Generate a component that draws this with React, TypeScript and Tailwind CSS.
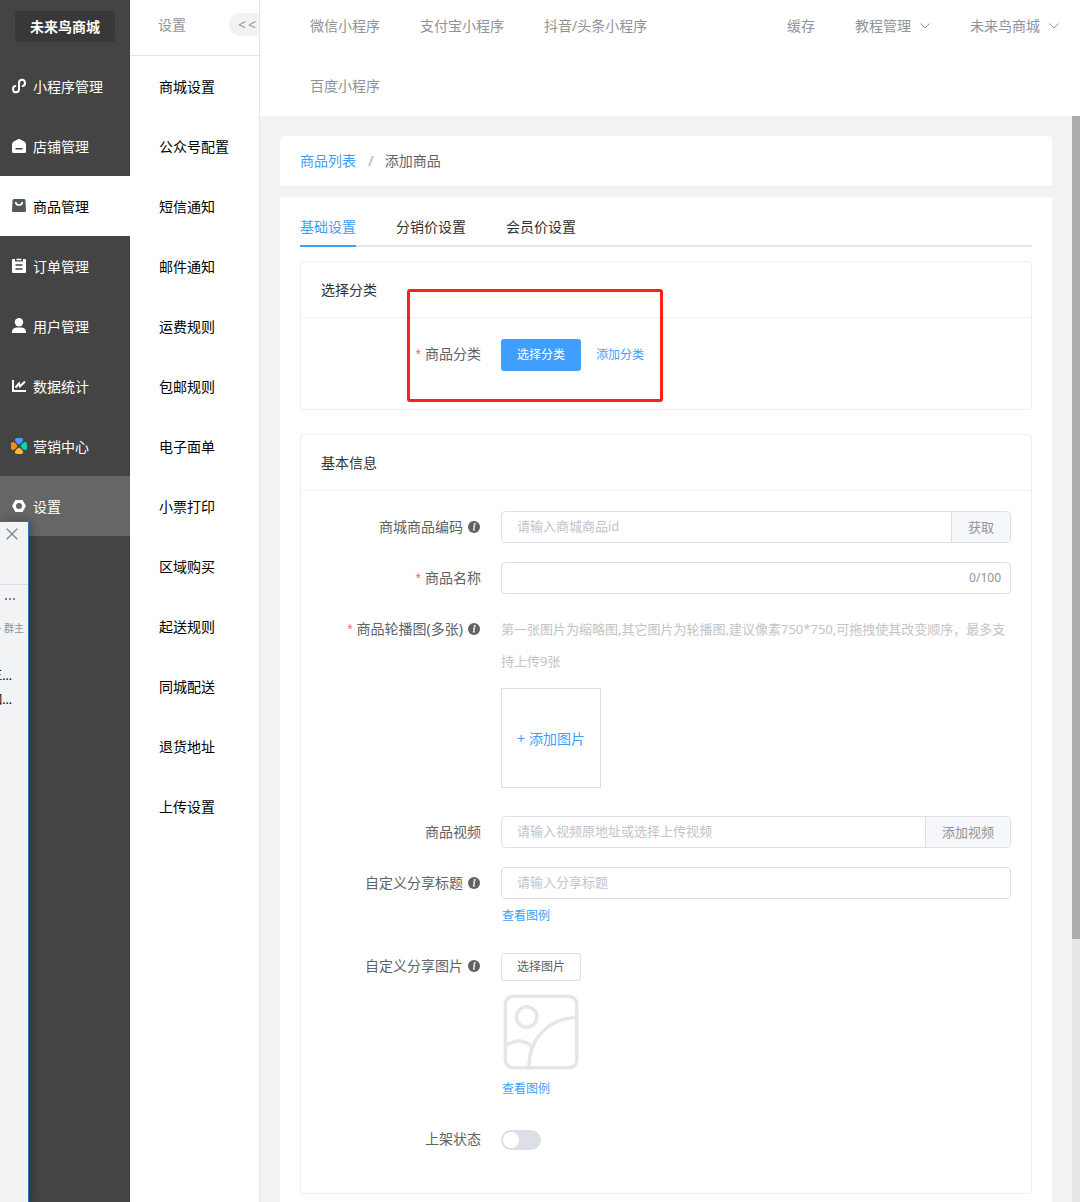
import type { ReactNode } from "react";
import { X } from "lucide-react";

function MiniProgramIcon() {
  return (
    <svg viewBox="0 0 16 16" className="size-4" fill="none" stroke="currentColor" strokeWidth="2" strokeLinecap="round" aria-hidden="true">
      <path d="M4.400 8A3 3.200 0 1 0 8 11V5A3 3.200 0 1 1 11.600 8" />
    </svg>
  );
}

function StoreIcon() {
  return (
    <svg viewBox="0 0 16 16" className="size-4" fill="currentColor" fillRule="evenodd" aria-hidden="true">
      <path d="M6.900 1.300Q8 .8 9.100 1.300L13.200 3.500Q15 4.600 15 6.500V13.500A1.500 1.500 0 0 1 13.500 15H2.500A1.500 1.500 0 0 1 1 13.500V6.500Q1 4.600 2.800 3.500ZM4.500 10V11.500H11.500V10Z" />
    </svg>
  );
}

function BagIcon() {
  return (
    <svg viewBox="0 0 16 16" className="size-4 text-[#50585f]" aria-hidden="true">
      <path fill="currentColor" d="M3 1H13Q14.300 1 14.400 2.300L15 12.500Q15 14 13.500 14H2.500Q1 14 1 12.500L1.600 2.300Q1.700 1 3 1Z" />
      <path d="M4.500 4Q5 7 8 7T11.500 4" fill="none" stroke="#fff" strokeWidth="1.600" />
    </svg>
  );
}

function OrderIcon() {
  return (
    <svg viewBox="0 0 16 16" className="size-4" aria-hidden="true">
      <path fill="currentColor" d="M2 1H4V3.500H12V1H14Q15 1 15 2V14Q15 15 14 15H2Q1 15 1 14V2Q1 1 2 1ZM5.500 0.800H10.500V2.300H5.500Z" />
      <path d="M4.500 7H11.500M4.500 11H11.500" stroke="#444" strokeWidth="1.500" />
    </svg>
  );
}

function UserIcon() {
  return (
    <svg viewBox="0 0 16 16" className="size-4" fill="currentColor" aria-hidden="true">
      <circle cx="8" cy="4.200" r="4.200" />
      <path d="M1 15V13.500Q1.500 9.500 6 9.500H10Q14.500 9.500 15 13.500V15Z" />
    </svg>
  );
}

function ChartIcon() {
  return (
    <svg viewBox="0 0 16 16" className="size-4" fill="none" stroke="currentColor" aria-hidden="true">
      <path d="M2 2V13H15" strokeWidth="2" />
      <path d="M4.500 9.500L8 5.500L9 8.500L14 3.500" strokeWidth="2" />
    </svg>
  );
}

function MarketingIcon() {
  return (
    <svg viewBox="0 0 16 16" className="size-4" aria-hidden="true">
      <path fill="#4a9bff" d="M5.500 0H10.500Q12.500.500 12 2.500Q11 5 8 6.500Q5 5 4 2.500Q3.500.500 5.500 0Z" />
      <path fill="#ff8c0a" d="M0 5.500V10.500Q.500 12.500 2.500 12Q5 11 6.500 8Q5 5 2.500 4Q.500 3.500 0 5.500Z" />
      <path fill="#00d8ae" d="M16 5.500V10.500Q15.500 12.500 13.500 12Q11 11 9.500 8Q11 5 13.500 4Q15.500 3.500 16 5.500Z" />
      <path fill="#ffb73c" d="M5.500 16H10.500Q12.500 15.500 12 13.500Q11 11 8 9.500Q5 11 4 13.500Q3.500 15.500 5.500 16Z" />
    </svg>
  );
}

function NutIcon() {
  return (
    <svg viewBox="0 0 16 16" className="size-4" aria-hidden="true">
      <path d="M5 3H11L13.800 8L11 13H5L2.200 8Z" fill="currentColor" stroke="currentColor" strokeWidth="2" strokeLinejoin="round" />
      <circle cx="8" cy="8" r="3" fill="#666" />
    </svg>
  );
}

function InfoIcon() {
  return (
    <svg viewBox="0 0 12 12" className="size-3 shrink-0" aria-hidden="true">
      <circle cx="6" cy="6" r="6" fill="#606266" />
      <circle cx="6.700" cy="3" r="1" fill="#fff" />
      <path d="M5 5H6.500L5.600 9H6.800" fill="none" stroke="#fff" strokeWidth="1.200" />
    </svg>
  );
}

function ArrowDown() {
  return (
    <svg viewBox="0 0 10 6" className="h-1.5 w-2.5" fill="none" stroke="currentColor" aria-hidden="true">
      <path d="M.5.5L5 5L9.500.5" />
    </svg>
  );
}

function PicturePlaceholder() {
  return (
    <svg viewBox="0 0 80 80" className="size-20" fill="none" stroke="#e6e6e6" strokeWidth="3.500" role="img" aria-label="分享图片">
      <rect x="4.300" y="4.300" width="71.500" height="71.500" rx="8" />
      <circle cx="25.700" cy="25" r="10.200" />
      <path d="M75 25.500C49 26 28 46 28 75" />
      <path d="M4.500 54Q17 44 31 54" />
    </svg>
  );
}

const mainNav: { label: string; icon: ReactNode; look: string }[] = [
  { label: "小程序管理", icon: <MiniProgramIcon />, look: "text-white" },
  { label: "店铺管理", icon: <StoreIcon />, look: "text-white" },
  { label: "商品管理", icon: <BagIcon />, look: "bg-white text-black" },
  { label: "订单管理", icon: <OrderIcon />, look: "text-white" },
  { label: "用户管理", icon: <UserIcon />, look: "text-white" },
  { label: "数据统计", icon: <ChartIcon />, look: "text-white" },
  { label: "营销中心", icon: <MarketingIcon />, look: "text-white" },
  { label: "设置", icon: <NutIcon />, look: "bg-[#666] text-white" },
];

const subNav = [
  "商城设置", "公众号配置", "短信通知", "邮件通知", "运费规则", "包邮规则", "电子面单",
  "小票打印", "区域购买", "起送规则", "同城配送", "退货地址", "上传设置",
];

const platforms = ["微信小程序", "支付宝小程序", "抖音/头条小程序", "百度小程序"];

function Card({ title, children }: { title: string; children: ReactNode }) {
  return (
    <section className="relative rounded border border-[#ebeef5]">
      <h2 className="border-b border-[#ebeef5] px-5 text-sm leading-[55px] text-[#303133]">{title}</h2>
      <div className="px-5 py-5">{children}</div>
    </section>
  );
}

type RowProps = { label: string; htmlFor: string; required?: boolean; info?: boolean; children: ReactNode };

function Row({ label, htmlFor, required, info, children }: RowProps) {
  return (
    <div className="flex">
      <label htmlFor={htmlFor} className="flex h-8 w-[180px] shrink-0 items-center justify-end pr-5 text-sm text-[#606266]">
        {required && <span className="mr-1 font-['Liberation_Sans',sans-serif] text-[#f56c6c]">*</span>}
        {label}
        {info && <span className="mr-px ml-[5px]"><InfoIcon /></span>}
      </label>
      <div className="min-w-0 flex-1">{children}</div>
    </div>
  );
}

const field = "h-8 min-w-0 flex-1 bg-transparent px-[15px] pb-0.5 text-[13px] text-[#606266] outline-none placeholder:text-[#c0c4cc]";
const group = "flex h-8 items-center overflow-hidden rounded border border-[#dcdfe6] bg-white";
const addon = "h-8 border-l border-[#dcdfe6] bg-[#f5f7fa] px-4 text-[13px] text-[#909399]";
const smallLink = "block h-8 w-fit pl-px text-xs leading-[34px] text-[#409eff]";

function ChatWindow() {
  return (
    <aside className="absolute top-[521px] bottom-0 left-0 flex w-[29px] flex-col border-t border-r border-[#2d6fc4] bg-[#f1f3f5] shadow-[2px_0_10px_rgba(0,0,0,0.3)]">
      <div className="flex h-[63px] items-start border-b border-[#d9dcdf] pt-0.5 pl-0.5">
        <button type="button" aria-label="关闭" className="text-[#7d848c]">
          <X className="size-5" strokeWidth={1.5} />
        </button>
      </div>
      <div className="flex h-[27px] items-center gap-0.5 pl-[5px]">
        <span className="size-0.5 bg-[#7d848c]" />
        <span className="size-0.5 bg-[#7d848c]" />
        <span className="size-0.5 bg-[#7d848c]" />
      </div>
      <div className="flex h-8 items-center justify-end overflow-hidden pr-1 text-[10px] whitespace-nowrap text-[#8d939b]">· 群主</div>
      <div className="mt-5 flex h-6 w-3 items-center justify-end overflow-hidden text-xs whitespace-nowrap text-black">王...</div>
      <div className="flex h-6 w-3 items-center justify-end overflow-hidden text-xs whitespace-nowrap text-black">国...</div>
    </aside>
  );
}

export default function App() {
  return (
    <div className="relative flex min-h-screen bg-white font-['Noto_Sans','Noto_Sans_CJK_SC',sans-serif] text-sm">
      <nav aria-label="主菜单" className="w-[130px] shrink-0 bg-[#444]">
        <div className="h-14 px-[15px] pt-[11px]">
          <a href="#home" className="block rounded bg-[#383838] text-center leading-[31px] font-bold text-white">未来鸟商城</a>
        </div>
        {mainNav.map((item) => (
          <a key={item.label} href="#menu" className={`flex h-[60px] items-center gap-1.5 pl-[11px] ${item.look}`}>
            {item.icon}
            <span className="pt-0.5">{item.label}</span>
          </a>
        ))}
      </nav>

      <nav aria-label="设置菜单" className="w-[130px] shrink-0 border-r border-[#e6e6e6]">
        <div className="flex h-14 items-center justify-between border-b border-[#e6e6e6] pb-1.5 pl-7 text-[#909399]">
          设置
          <button type="button" aria-label="收起" className="flex h-[23px] w-[30px] items-center justify-center gap-0.5 rounded-l-full bg-[#f2f2f2] pl-1.5">
            <span>&lt;</span>
            <span>&lt;</span>
          </button>
        </div>
        {subNav.map((label) => (
          <a key={label} href="#sub" className="block h-[60px] pl-[29px] leading-[62px] text-black">{label}</a>
        ))}
      </nav>

      <div className="flex min-w-0 flex-1 flex-col">
        <header className="flex items-start pt-4 pb-5 leading-5 text-[#909399]">
          <div className="flex min-w-0 flex-1 flex-wrap gap-10 pr-10 pl-[50px]">
            {platforms.map((p) => (
              <a key={p} href="#platform">{p}</a>
            ))}
          </div>
          <div className="flex shrink-0 gap-10 pr-[21px]">
            <a href="#cache">缓存</a>
            <button type="button" className="flex items-center gap-[9px]">
              教程管理
              <ArrowDown />
            </button>
            <button type="button" className="flex items-center gap-[9px]">
              未来鸟商城
              <ArrowDown />
            </button>
          </div>
        </header>

        <div className="flex flex-1">
          <main className="flex min-w-0 flex-1 flex-col bg-[#f2f2f2] px-5 pt-5">
            <div className="mb-2.5 rounded-t border-b border-[#ebeef5] bg-white px-5 leading-[50px] text-[#606266]">
              <a href="#list" className="text-[#409eff]">商品列表</a>
              <span className="mr-[11px] ml-3 font-bold text-[#c0c4cc]">/</span>
              <span>添加商品</span>
            </div>

            <div className="flex-1 bg-white px-5 pt-3">
              <div role="tablist" className="mb-3.5 flex gap-10 border-b-2 border-[#e4e7ed] text-[#303133]">
                <button type="button" role="tab" aria-selected="true" className="-mb-0.5 border-b-2 border-[#409eff] leading-9 text-[#409eff]">基础设置</button>
                <button type="button" role="tab" aria-selected="false" className="leading-9">分销价设置</button>
                <button type="button" role="tab" aria-selected="false" className="leading-9">会员价设置</button>
              </div>

              <div className="flex flex-col gap-6">
                <Card title="选择分类">
                  <div className="pb-[18px]">
                    <Row label="商品分类" htmlFor="category" required>
                      <div className="flex items-center gap-[15px] pt-px">
                        <button id="category" type="button" className="h-8 rounded-[3px] bg-[#409eff] px-4 text-xs text-white">选择分类</button>
                        <a href="#add" className="text-xs text-[#409eff]">添加分类</a>
                      </div>
                    </Row>
                  </div>
                  <div className="pointer-events-none absolute top-[27px] left-[106px] h-[113px] w-64 rounded-[3px] border-3 border-[#ff2116]" />
                </Card>

                <Card title="基本信息">
                  <div className="flex flex-col gap-[19px] pb-[18px]">
                    <Row label="商城商品编码" htmlFor="code" info>
                      <div className={group}>
                        <input id="code" type="text" placeholder="请输入商城商品id" className={field} />
                        <button type="button" className={addon}>获取</button>
                      </div>
                    </Row>
                    <Row label="商品名称" htmlFor="name" required>
                      <div className={group}>
                        <input id="name" type="text" maxLength={100} className={field} />
                        <span className="pr-[9px] text-xs text-[#909399]">0/100</span>
                      </div>
                    </Row>
                    <Row label="商品轮播图(多张)" htmlFor="gallery" required info>
                      <p className="text-[13px] leading-8 text-[#c4c4c4]">
                        第一张图片为缩略图,其它图片为轮播图,建议像素750*750,可拖拽使其改变顺序，最多支持上传9张
                      </p>
                      <button id="gallery" type="button" className="mt-[11px] mb-[9px] flex size-[100px] items-center justify-center gap-1 border border-[#dcdfe6] pt-0.5 text-sm text-[#409eff]">
                        <span>+</span>
                        <span>添加图片</span>
                      </button>
                    </Row>
                    <Row label="商品视频" htmlFor="video">
                      <div className={group}>
                        <input id="video" type="text" placeholder="请输入视频原地址或选择上传视频" className={field} />
                        <button type="button" className={addon}>添加视频</button>
                      </div>
                    </Row>
                    <Row label="自定义分享标题" htmlFor="share-title" info>
                      <div className={group}>
                        <input id="share-title" type="text" placeholder="请输入分享标题" className={field} />
                      </div>
                      <a href="#example" className={smallLink}>查看图例</a>
                    </Row>
                    <Row label="自定义分享图片" htmlFor="share-image" info>
                      <div className="flex h-[42px] items-start pt-[3px]">
                        <button id="share-image" type="button" className="h-7 rounded-[3px] border border-[#dcdfe6] px-[15px] text-xs text-[#606266]">选择图片</button>
                      </div>
                      <PicturePlaceholder />
                      <a href="#example" className={smallLink}>查看图例</a>
                    </Row>
                    <Row label="上架状态" htmlFor="on-sale">
                      <div className="flex h-8 items-center pt-0.5">
                        <input
                          id="on-sale"
                          type="checkbox"
                          role="switch"
                          className="h-5 w-10 appearance-none rounded-full bg-[#dcdfe6] p-0.5 before:block before:size-4 before:rounded-full before:bg-white checked:bg-[#409eff] checked:before:ml-5"
                        />
                      </div>
                    </Row>
                  </div>
                </Card>
              </div>
            </div>
          </main>

          <div className="flex w-2 shrink-0 flex-col bg-[#e6e6e6]" aria-hidden="true">
            <div className="flex-[25] bg-[#acacac]" />
            <div className="flex-[8]" />
          </div>
        </div>
      </div>

      <ChatWindow />
    </div>
  );
}
